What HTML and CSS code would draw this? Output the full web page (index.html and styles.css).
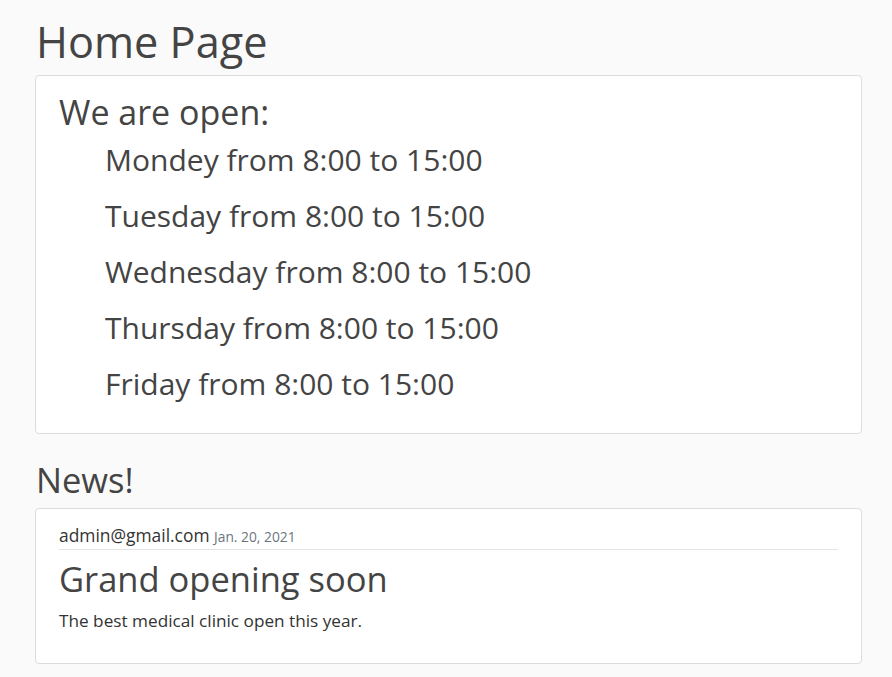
FILE: index.html
```html
<!DOCTYPE html>
<html lang="en">
<head>
<meta charset="utf-8">
<title>Home Page</title>
<link rel="stylesheet" href="styles.css">
</head>
<body>
<main class="page">
  <h1 class="page-title">Home Page</h1>
  <section class="card hours">
    <h2 class="hours-title">We are open:</h2>
    <ul class="hours-list">
      <li>Mondey from 8:00 to 15:00</li>
      <li>Tuesday from 8:00 to 15:00</li>
      <li>Wednesday from 8:00 to 15:00</li>
      <li>Thursday from 8:00 to 15:00</li>
      <li>Friday from 8:00 to 15:00</li>
    </ul>
  </section>
  <h2 class="news-title">News!</h2>
  <article class="card post">
    <div class="post-meta"><span class="post-author">admin@gmail.com</span> <small class="post-date">Jan. 20, 2021</small></div>
    <h3 class="post-title">Grand opening soon</h3>
    <p class="post-body">The best medical clinic open this year.</p>
  </article>
</main>
</body>
</html>
```
FILE: styles.css
```css
html, body {
  margin: 0;
  padding: 0;
}
body {
  background: #fafafa;
  color: #444;
  font-family: "Open Sans", "Noto Sans", sans-serif;
}
.page {
  padding: 16px 30px 0 35px;
}
.page-title {
  margin: 0 0 7px 1px;
  font-weight: 400;
  font-size: 43.3px;
  line-height: 52px;
}
.card {
  background: #fff;
  border: 1px solid #dcdcdc;
  border-radius: 4px;
  padding: 0 23px;
}
.hours {
  padding-top: 14px;
  padding-bottom: 21px;
}
.hours-title {
  margin: 0 0 -2px;
  font-weight: 400;
  font-size: 34px;
  line-height: 44px;
}
.hours-list {
  list-style: none;
  margin: 0;
  padding: 0 0 0 46px;
}
.hours-list li {
  font-size: 30px;
  line-height: 56px;
}
.news-title {
  margin: 24px 0 6px 1px;
  font-weight: 400;
  font-size: 34.5px;
  line-height: 44px;
}
.post {
  padding-top: 14px;
  padding-bottom: 31px;
}
.post-meta {
  font-size: 17.4px;
  line-height: 24px;
  padding-bottom: 2px;
  border-bottom: 1px solid #e5e5e5;
}
.post-author {
  color: #333;
}
.post-date {
  font-size: 13.8px;
  line-height: 1;
  color: #6c757d;
}
.post-title {
  margin: 8px 0 0;
  font-weight: 400;
  font-size: 34.5px;
  line-height: 42px;
}
.post-body {
  margin: 10px 0 0;
  font-size: 17.2px;
  line-height: 22px;
  color: #333;
}
```
